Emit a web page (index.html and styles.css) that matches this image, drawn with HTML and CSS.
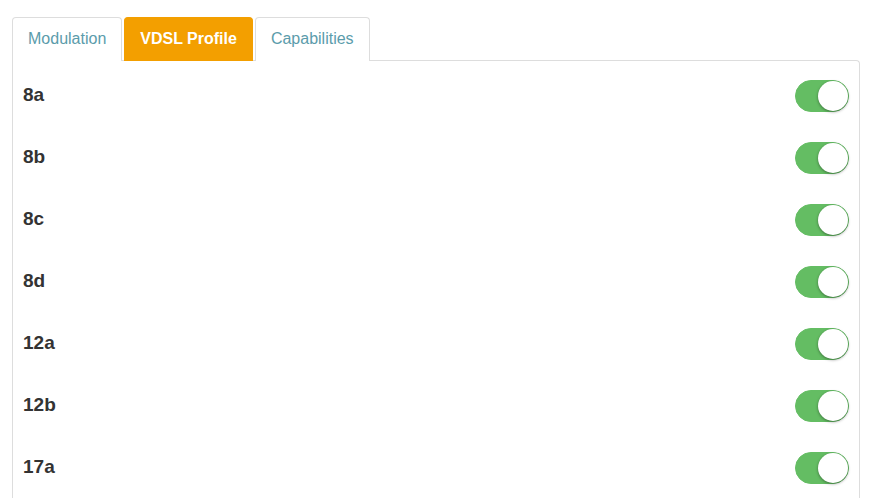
FILE: index.html
```html
<!DOCTYPE html>
<html lang="en">
<head>
    <meta charset="UTF-8">
    <title>VDSL Profile</title>
    <link rel="stylesheet" href="styles.css">
</head>
<body>
<div class="wrap">
    <ul class="tabs">
        <li><a href="#">Modulation</a></li>
        <li class="active"><a href="#">VDSL Profile</a></li>
        <li><a href="#">Capabilities</a></li>
    </ul>
    <div class="panel">
        <div class="row"><span class="name">8a</span><span class="switch on"><small></small></span></div>
        <div class="row"><span class="name">8b</span><span class="switch on"><small></small></span></div>
        <div class="row"><span class="name">8c</span><span class="switch on"><small></small></span></div>
        <div class="row"><span class="name">8d</span><span class="switch on"><small></small></span></div>
        <div class="row"><span class="name">12a</span><span class="switch on"><small></small></span></div>
        <div class="row"><span class="name">12b</span><span class="switch on"><small></small></span></div>
        <div class="row"><span class="name">17a</span><span class="switch on"><small></small></span></div>
    </div>
</div>
</body>
</html>
```

FILE: styles.css
```css
* {
    padding: 0;
    margin: 0;
    list-style: none;
    box-sizing: border-box;
}

body {
    font-family: "Liberation Sans", Arial, sans-serif;
    color: #333;
    background: #fff;
}

.wrap {
    padding: 17px 13px 0 12px;
}

.tabs {
    display: flex;
    gap: 2px;
    margin-bottom: -1px;
}

.tabs a {
    display: block;
    padding: 10px 15px 11px;
    font-size: 16px;
    line-height: 22px;
    color: #5b9cab;
    text-decoration: none;
    border: 1px solid #ddd;
    border-bottom: 0;
    border-radius: 4px 4px 0 0;
    background: #fff;
}

.tabs .active a {
    background: #f39f00;
    border-color: #f39f00;
    color: #fff;
    font-weight: bold;
}

.panel {
    border: 1px solid #ddd;
    border-radius: 0 4px 0 0;
    border-bottom: 0;
    padding: 3px 10px 0 10px;
}

.row {
    height: 62px;
    display: flex;
    align-items: center;
    justify-content: space-between;
}

.name {
    font-size: 19px;
    font-weight: bold;
    color: #333;
}

.switch {
    position: relative;
    display: block;
    width: 54px;
    height: 32px;
    border-radius: 16px;
    background: #64bd63;
    border: 1px solid #64bd63;
    margin-top: 2px;
}

.switch small {
    position: absolute;
    top: 0;
    right: 0;
    width: 30px;
    height: 30px;
    border-radius: 50%;
    background: #fff;
    box-shadow: 0 1px 3px rgba(0, 0, 0, 0.4);
}
```
